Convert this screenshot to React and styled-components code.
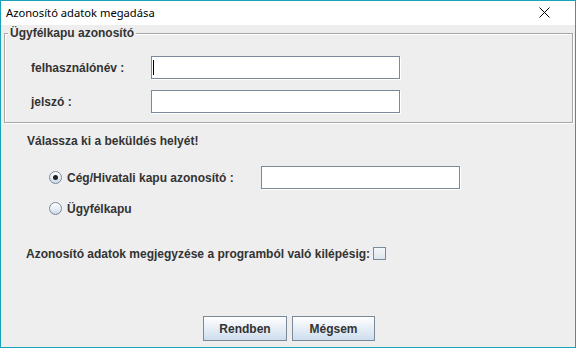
import React from "react";
import styled, { createGlobalStyle } from "styled-components";

const Global = createGlobalStyle`
  html, body { margin: 0; padding: 0; background: #eeeeee; }
  * { box-sizing: border-box; }
`;

const Window = styled.div`
  width: 576px;
  height: 348px;
  border: 1px solid #1aa3b8;
  background: #eeeeee;
  display: flex;
  flex-direction: column;
  font-family: "Liberation Sans", Arial, sans-serif;
  color: #333333;
  overflow: hidden;
`;

const TitleBar = styled.div`
  height: 24px;
  flex: none;
  background: #ffffff;
  display: flex;
  align-items: center;
  justify-content: space-between;
  padding: 0 0 1px 5px;
`;

const TitleText = styled.span`
  font-family: "Noto Sans", "Open Sans", sans-serif;
  font-size: 11.2px;
  color: #000;
`;

const CloseBtn = styled.div`
  width: 46px;
  height: 23px;
  display: flex;
  align-items: center;
  justify-content: center;
  margin-right: 8px;
`;

const Content = styled.div`
  flex: 1;
  display: flex;
  flex-direction: column;
  padding: 8px 2px 0 3px;
`;

const Group = styled.fieldset`
  margin: 0;
  padding: 0 0 0 26px;
  border: 1px solid #a8a8a8;
  box-shadow: inset 1px 1px 0 #ffffff, 1px 1px 0 #ffffff;
  height: 90px;
  flex: none;
  position: relative;
  display: flex;
  flex-direction: column;
`;

const Legend = styled.legend`
  position: absolute;
  top: -8px;
  left: 3px;
  padding: 0 2px 0 2px;
  background: #eeeeee;
  font-weight: bold;
  font-size: 12px;
  line-height: 15px;
`;

const FieldRow = styled.div`
  display: flex;
  align-items: center;
  height: 23px;
  margin-top: ${(p) => p.$top}px;
`;

const Label = styled.span`
  font-weight: bold;
  font-size: 12px;
  width: ${(p) => (p.$w ? `${p.$w}px` : "auto")};
  white-space: nowrap;
  flex: none;
`;

const Input = styled.div`
  position: relative;
  width: ${(p) => p.$w}px;
  height: 23px;
  flex: none;
  background: #ffffff;
  border: 1px solid #7a8a99;
  box-shadow: 1px 1px 0 #ffffff;
`;

const Caret = styled.div`
  position: absolute;
  left: 1px;
  top: 3px;
  width: 1px;
  height: 15px;
  background: #000;
`;

const Heading = styled.div`
  font-weight: bold;
  font-size: 12px;
  margin: 11px 0 0 23px;
  line-height: 15px;
`;

const RadioRow = styled.div`
  display: flex;
  align-items: center;
  height: 23px;
  margin-top: ${(p) => p.$top}px;
  padding-left: 45px;
`;

const Radio = styled.span`
  width: 13px;
  height: 13px;
  border-radius: 50%;
  border: 1px solid #7a8a99;
  background: linear-gradient(180deg, #ffffff 0%, #e3ebf3 60%, #c9d7e6 100%);
  display: flex;
  align-items: center;
  justify-content: center;
  margin-right: 5px;
  flex: none;
  &::after {
    content: "";
    width: 5px;
    height: 5px;
    border-radius: 50%;
    background: ${(p) => (p.$on ? "#222" : "transparent")};
  }
`;

const CheckRow = styled.div`
  display: flex;
  align-items: center;
  margin: 26px 0 0 22px;
  height: 15px;
`;

const Check = styled.span`
  width: 13px;
  height: 13px;
  margin-left: 3px;
  flex: none;
  border: 1px solid #7a8a99;
  background: linear-gradient(180deg, #f4f7fb 0%, #dbe4ee 100%);
`;

const Buttons = styled.div`
  display: flex;
  justify-content: center;
  gap: 5px;
  margin-top: 55px;
  padding-left: 1px;
`;

const Button = styled.button`
  width: ${(p) => p.$w}px;
  height: 25px;
  border: 1px solid #7a8a99;
  background: linear-gradient(180deg, #ffffff 0%, #eef3f8 35%, #cdddee 100%);
  font-family: "Liberation Sans", Arial, sans-serif;
  font-weight: bold;
  font-size: 12px;
  color: #333333;
  padding: 0;
`;

export default function App() {
  return (
    <>
      <Global />
      <Window>
        <TitleBar>
          <TitleText>Azonosító adatok megadása</TitleText>
          <CloseBtn>
            <svg width="11" height="11" viewBox="0 0 11 11">
              <path d="M0.5 0.5 L10.5 10.5 M10.5 0.5 L0.5 10.5" stroke="#000" strokeWidth="1" />
            </svg>
          </CloseBtn>
        </TitleBar>
        <Content>
          <Group>
            <Legend>Ügyfélkapu azonosító</Legend>
            <FieldRow $top={22}>
              <Label $w={120}>felhasználónév :</Label>
              <Input $w={249}>
                <Caret />
              </Input>
            </FieldRow>
            <FieldRow $top={11}>
              <Label $w={120}>jelszó :</Label>
              <Input $w={249} />
            </FieldRow>
          </Group>
          <Heading>Válassza ki a beküldés helyét!</Heading>
          <RadioRow $top={17}>
            <Radio $on />
            <Label $w={194}>Cég/Hivatali kapu azonosító :</Label>
            <Input $w={199} />
          </RadioRow>
          <RadioRow $top={8}>
            <Radio />
            <Label>Ügyfélkapu</Label>
          </RadioRow>
          <CheckRow>
            <Label>Azonosító adatok megjegyzése a programból való kilépésig:</Label>
            <Check />
          </CheckRow>
          <Buttons>
            <Button $w={84}>Rendben</Button>
            <Button $w={83}>Mégsem</Button>
          </Buttons>
        </Content>
      </Window>
    </>
  );
}
